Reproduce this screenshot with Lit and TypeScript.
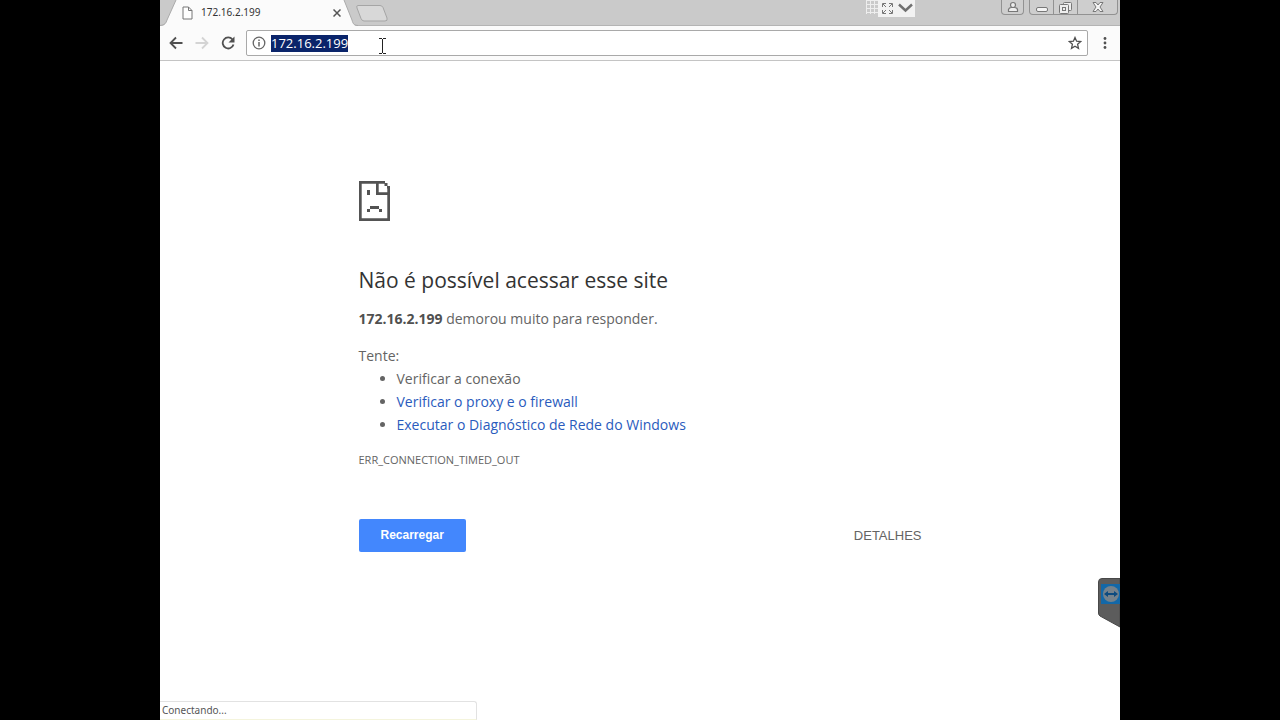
import { LitElement, html, css } from "lit";
import { customElement, query } from "lit/decorators.js";

@customElement("browser-chrome")
class BrowserChrome extends LitElement {
  @query(".address") address!: HTMLInputElement;

  static styles = css`
    :host { display: block; position: relative; font-family: "Open Sans", "Noto Sans", sans-serif; }
    button { border: 0; padding: 0; background: none; display: flex; align-items: center; justify-content: center; }
    svg { display: block; }
    .strip { display: flex; height: 26px; background: #cacaca; box-shadow: inset 0 -1px #b4b4b4; }
    .tab { position: relative; display: flex; align-items: center; width: 198px; height: 26px; box-sizing: border-box; padding: 0 15px 0 22px; }
    .shape { position: absolute; inset: 0; }
    .page { position: relative; margin-right: 8px; }
    .title { position: relative; flex: 1; font: 10px/24px "Noto Sans", sans-serif; color: #333; padding-bottom: 2px; }
    .close { position: relative; width: 12px; height: 26px; }
    .new-tab { height: 26px; align-items: center; margin-left: -3px; }
    .spacer { flex: 1; }
    .remote { display: flex; height: 17px; margin-right: 86px; }
    .remote-buttons { display: flex; align-items: center; background: #f2f2f2; width: 37px; height: 17px; }
    .window { display: flex; height: 15px; margin-right: 2px; }
    .window button { height: 15px; box-sizing: border-box; border: 1px solid #929292; border-top: 0; background: #cecece; }
    .window .user { width: 23px; border-radius: 0 0 4px 4px; margin-right: 5px; }
    .window .min { width: 25px; border-radius: 0 0 0 4px; }
    .window .restore { width: 24px; border-left: 0; }
    .window .exit { width: 40px; border-left: 0; border-radius: 0 0 4px 0; }
    .toolbar { display: flex; align-items: center; height: 35px; box-sizing: border-box; padding: 0 10px 0 9px; background: #fbfbfb; border-bottom: 1px solid #c4c4c4; }
    .nav { display: flex; gap: 12px; margin-right: 11px; }
    .nav button { width: 14px; height: 26px; }
    .field { flex: 1; display: flex; align-items: center; height: 26px; box-sizing: border-box; border: 1px solid #a9a9a9; border-radius: 2px; background: #fff; padding: 0 5px; }
    .address { flex: 1; min-width: 0; border: 0; outline: 0; padding: 0; margin: 0 5px; background: none; color: #222; font: 13px/17px "Open Sans", sans-serif; height: 17px; }
    .address::selection { background: #0a246a; color: #fff; }
    .menu { width: 10px; height: 26px; margin-left: 12px; }
    .cursor { position: absolute; left: 218px; top: 37px; }
  `;

  firstUpdated() {
    this.address.focus();
    this.address.select();
  }

  render() {
    return html`
      <div class="strip">
        <div class="tab">
          <svg class="shape" width="198" height="26" viewBox="0 0 198 26">
            <path d="M0 26 C5 26 6 23 7 20 L16 0 H184 L192 20 C193 24 194 26 198 26Z" fill="#fbfbfb" />
            <path d="M0 25.5 C5 25 6 23 7 20 L16 0 M184 0 L192 20 C193 24 194 25 198 25.5" fill="none" stroke="#aaa" />
          </svg>
          <svg class="page" width="11" height="14" viewBox="0 0 11 14"><path d="M1 1H6.5L10 4.500V13H1ZM6.500 1V4.500H10" fill="#fff" stroke="#777" /></svg>
          <span class="title">172.16.2.199</span>
          <button class="close" aria-label="Fechar guia"><svg width="8" height="8" viewBox="0 0 8 8"><path d="M.5 .5L7.500 7.500M7.500 .5L.5 7.500" stroke="#555" stroke-width="1.500" /></svg></button>
        </div>
        <button class="new-tab" aria-label="Nova guia"><svg width="34" height="26" viewBox="0 0 34 26"><path d="M3 5.500H25Q27 5.500 28 7.500L32 18Q33 21 30 21H9Q7 21 6 18.500L2 8Q1 5.500 3 5.500Z" fill="#d8d8d8" stroke="#a5a5a5" /></svg></button>
        <div class="spacer"></div>
        <div class="remote">
          <svg width="12" height="14" viewBox="0 0 12 14"><path d="M.5 0V14M4.500 0V14M8.500 0V14M0 .5H12M0 4.500H12M0 8.500H12M0 12.500H12" stroke="#eee" /></svg>
          <div class="remote-buttons">
            <button aria-label="Tela cheia"><svg width="18" height="15" viewBox="0 0 18 15"><g fill="none" stroke="#777"><path d="M4.500 6V2.500H8M11 2.500H14.500V6M4.500 9V12.500H8M11 12.500H14.500V9M5 3L8 6M14 3L11 6M5 12L8 9M14 12L11 9" /></g></svg></button>
            <button aria-label="Opções"><svg width="18" height="15" viewBox="0 0 18 15"><path d="M3 3.500L9.500 9.500L16 3.500" fill="none" stroke="#707070" stroke-width="2.400" /></svg></button>
          </div>
        </div>
        <div class="window">
          <button class="user" aria-label="Usuário"><svg width="12" height="12" viewBox="0 0 12 12"><path d="M1.500 10.500V8.500Q2 6.500 4.500 6.500H7.500Q10 6.500 10.500 8.500V10.500Z" fill="#eee" stroke="#777" stroke-width="1.200" /><circle cx="6" cy="4" r="2.500" fill="#eee" stroke="#777" stroke-width="1.200" /></svg></button>
          <button class="min" aria-label="Minimizar"><svg width="12" height="12" viewBox="0 0 12 12"><rect x=".5" y="6.500" width="11" height="4" rx="1.500" fill="#f4f4f4" stroke="#777" /></svg></button>
          <button class="restore" aria-label="Restaurar"><svg width="13" height="13" viewBox="0 0 13 13"><g fill="#eee" stroke="#777"><rect x="4.500" y="1.500" width="8" height="8" rx="1" /><rect x=".5" y="3.500" width="9" height="9" rx="1" /><rect x="3.500" y="6.500" width="3" height="3" /></g></svg></button>
          <button class="exit" aria-label="Fechar"><svg width="12" height="12" viewBox="0 0 12 12"><path d="M1 1.500H4L6 4L8 1.500H11L8 6L11 10.500H8L6 8L4 10.500H1L4 6Z" fill="#f4f4f4" stroke="#777" /></svg></button>
        </div>
      </div>
      <div class="toolbar">
        <div class="nav">
          <button aria-label="Voltar"><svg width="14" height="14" viewBox="0 0 14 14"><path d="M13.500 7H1.500M7 1.500L1.500 7L7 12.500" fill="none" stroke="#505050" stroke-width="1.800" /></svg></button>
          <button aria-label="Avançar"><svg width="14" height="14" viewBox="0 0 14 14"><path d="M.5 7H12.500M7 1.500L12.500 7L7 12.500" fill="none" stroke="#d4d4d4" stroke-width="1.800" /></svg></button>
          <button aria-label="Recarregar página"><svg width="14" height="14" viewBox="0 0 14 14"><path d="M11.500 3.500A5.500 5.500 0 1 0 12.500 8.500" fill="none" stroke="#505050" stroke-width="1.800" /><path d="M13.500 .5V6.500H7.500Z" fill="#505050" /></svg></button>
        </div>
        <div class="field">
          <svg width="14" height="14" viewBox="0 0 14 14"><circle cx="7" cy="7" r="5.800" fill="none" stroke="#666" stroke-width="1.300" /><path d="M7 6V10.500M7 3.500V5" stroke="#666" stroke-width="1.500" /></svg>
          <input class="address" type="text" aria-label="Endereço" spellcheck="false" value="172.16.2.199" />
          <button aria-label="Adicionar aos favoritos"><svg width="14" height="14" viewBox="0 0 14 14"><path d="M7 1.500L8.600 5.200L12.700 5.600L9.600 8.300L10.500 12.300L7 10.200L3.500 12.300L4.400 8.300L1.300 5.600L5.400 5.200Z" fill="#fff" stroke="#505050" stroke-width="1.300" /></svg></button>
        </div>
        <button class="menu" aria-label="Menu"><svg width="4" height="14" viewBox="0 0 4 14"><g fill="#505050"><circle cx="2" cy="2.500" r="1.400" /><circle cx="2" cy="7" r="1.400" /><circle cx="2" cy="11.500" r="1.400" /></g></svg></button>
      </div>
      <svg class="cursor" width="9" height="18" viewBox="0 0 9 18"><path d="M1 1.500H4M5 1.500H8M4.500 2V16M1 16.500H4M5 16.500H8" fill="none" stroke="#222" /></svg>
    `;
  }
}

@customElement("error-page")
class ErrorPage extends LitElement {
  static styles = css`
    :host { display: block; font: 14px/23px "Open Sans", "Noto Sans", sans-serif; color: #646464; }
    .content { width: calc(100% - 64px); max-width: 563px; margin: 0 auto; padding-top: 120px; }
    .face { display: block; margin-bottom: 38px; }
    h1 { margin: 0 0 6px; font-size: 21px; line-height: 42px; font-weight: 400; color: #333; }
    p { margin: 0 0 14px; }
    strong { color: #505050; }
    .try { margin: 0; }
    ul { margin: 0 0 12px; padding-left: 38px; }
    a { color: #2a5bbd; text-decoration: none; }
    .code { font-size: 11px; }
    .actions { display: flex; justify-content: space-between; align-items: center; margin-top: 48px; }
    button { font: 13px/17px "Liberation Sans", sans-serif; border: 0; padding: 8px 22px; }
    .reload { background: #4387fd; color: #fff; border-radius: 2px; font-size: 12px; font-weight: 700; }
    .details { background: none; color: #646464; padding: 8px 0; }
  `;

  render() {
    return html`
      <main class="content">
        <svg class="face" width="32" height="40" viewBox="0 0 32 40">
          <g fill="#535353">
            <path d="M0 0H26V2.700H2.700V37.300H28.300V14H17V2H19.700V11.300H31V40H0Z" />
            <path d="M25.500 2H28.500V5H25.500ZM28 5H31V7.500H28ZM28.300 7H31V14H28.300Z" />
            <path d="M8 9H11V14H8ZM11 25H20V28H11ZM8 28H11V31H8ZM20 28H23V31H20Z" />
          </g>
        </svg>
        <h1>Não é possível acessar esse site</h1>
        <p><strong>172.16.2.199</strong> demorou muito para responder.</p>
        <p class="try">Tente:</p>
        <ul>
          <li>Verificar a conexão</li>
          <li><a href="#proxy">Verificar o proxy e o firewall</a></li>
          <li><a href="#diagnostico">Executar o Diagnóstico de Rede do Windows</a></li>
        </ul>
        <div class="code">ERR_CONNECTION_TIMED_OUT</div>
        <div class="actions">
          <button class="reload">Recarregar</button>
          <button class="details">DETALHES</button>
        </div>
      </main>
    `;
  }
}

@customElement("app-root")
class AppRoot extends LitElement {
  static styles = css`
    :host { display: flex; justify-content: center; min-height: 100vh; background: #000; }
    .screen { position: relative; width: 75%; background: #fff; overflow: hidden; }
    .status { position: absolute; left: 0; bottom: 0; width: 33%; height: 19px; box-sizing: border-box; padding-left: 2px; border: 1px solid #e2e2e2; border-left: 0; border-bottom-color: #f4f4dc; border-radius: 0 3px 0 0; background: #fff; font: 10px/17px "Noto Sans", sans-serif; color: #555; }
    .panel { position: absolute; right: 0; bottom: 92px; border: 0; padding: 0; background: none; }
    .panel svg { display: block; }
  `;

  render() {
    return html`
      <div class="screen">
        <browser-chrome></browser-chrome>
        <error-page></error-page>
        <div class="status" role="status">Conectando...</div>
        <button class="panel" aria-label="Painel remoto">
          <svg width="22" height="50" viewBox="0 0 22 50">
            <path d="M22 .5H4Q.5 .5 .5 4V35Q.5 37 2 38L22 49Z" fill="#5c5c5c" stroke="#484848" />
            <rect x="3" y="6" width="19" height="20" fill="#1368a8" />
            <circle cx="13" cy="16" r="8" fill="#75828c" />
            <path d="M6 16L10 13V15H16V13L20 16L16 19V17H10V19Z" fill="#0d4b80" />
          </svg>
        </button>
      </div>
    `;
  }
}
